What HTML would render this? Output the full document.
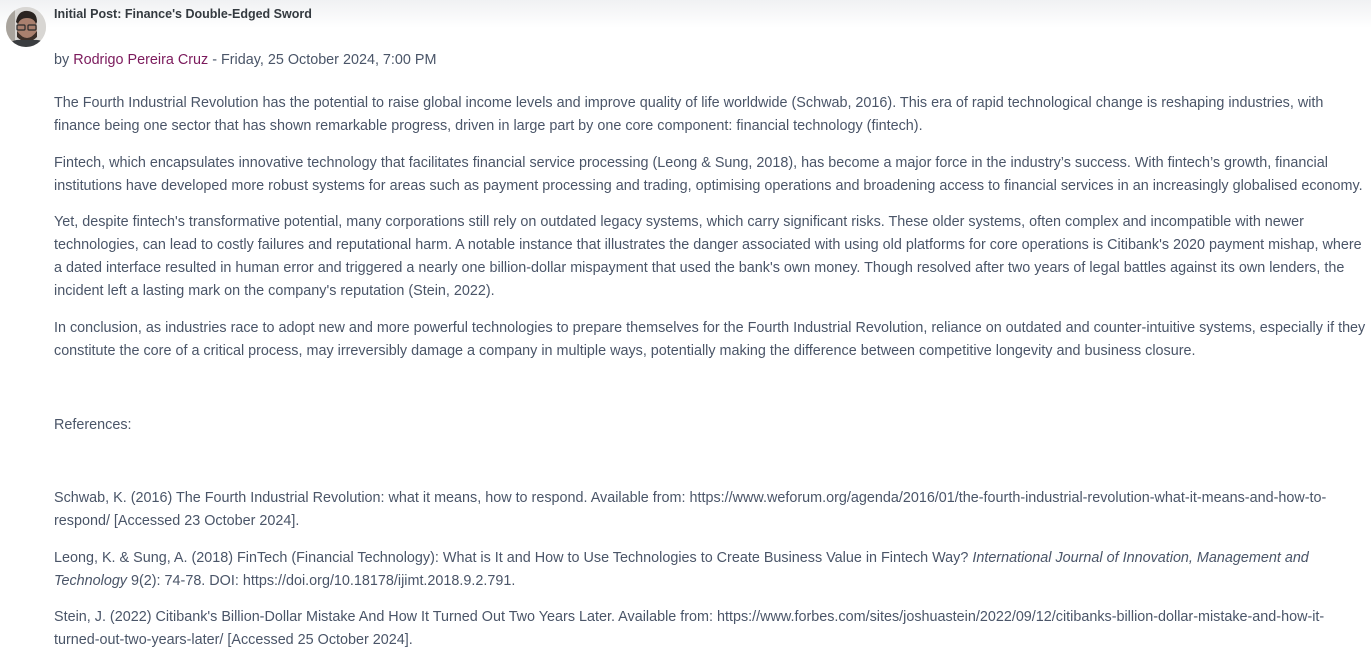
<!DOCTYPE html>
<html><head><meta charset="utf-8"><style>
body{margin:0;width:1371px;height:658px;background:#fff;overflow:hidden;position:relative;font-family:"Liberation Sans",Arial,sans-serif;color:#4a5568;}
.top{position:absolute;left:0;top:0;width:1371px;height:28px;background:linear-gradient(#f0f1f3,#fff);}
.l{position:absolute;left:54px;white-space:nowrap;font-size:14.38px;line-height:23px;}
.t{position:absolute;left:54px;top:7px;font-size:12.5px;font-weight:bold;color:#343a40;white-space:nowrap;}
a{color:#7b1a5c;text-decoration:none}
.av{position:absolute;left:6px;top:7px;width:40px;height:40px;border-radius:50%;overflow:hidden;background:#d6d4d1;}
</style></head><body>
<div class="top"></div>
<div class="av"><svg width="40" height="40" viewBox="0 0 40 40">
<rect width="40" height="40" fill="#d8d6d3"/>
<rect x="0" y="0" width="9" height="40" fill="#a9a49d"/>
<ellipse cx="21" cy="21" rx="10" ry="12" fill="#a9806e"/>
<path d="M10 15 Q12 3 22 4 Q31 5 31 15 L30 17 Q28 11 21 11 Q14 11 12 17Z" fill="#2a2320"/>
<path d="M11 24 Q21 38 31 24 L31 30 Q21 40 11 30Z" fill="#3b2f29"/>
<rect x="11" y="18" width="8" height="5" rx="1" fill="none" stroke="#2a2a2a" stroke-width="1.2"/>
<rect x="22" y="18" width="8" height="5" rx="1" fill="none" stroke="#2a2a2a" stroke-width="1.2"/>
<path d="M0 40 Q6 32 14 33 L28 33 Q36 32 40 38 L40 40Z" fill="#3a3d40"/>
</svg></div>
<div class="t">Initial Post: Finance's Double-Edged Sword</div>
<div class="l" style="top:49px">by <a>Rodrigo Pereira Cruz</a> - Friday, 25 October 2024, 7:00 PM</div>
<div class="l" style="top:92px">The Fourth Industrial Revolution has the potential to raise global income levels and improve quality of life worldwide (Schwab, 2016). This era of rapid technological change is reshaping industries, with<br>finance being one sector that has shown remarkable progress, driven in large part by one core component: financial technology (fintech).</div>
<div class="l" style="top:152px">Fintech, which encapsulates innovative technology that facilitates financial service processing (Leong &amp; Sung, 2018), has become a major force in the industry’s success. With fintech’s growth, financial<br>institutions have developed more robust systems for areas such as payment processing and trading, optimising operations and broadening access to financial services in an increasingly globalised economy.</div>
<div class="l" style="top:211px">Yet, despite fintech's transformative potential, many corporations still rely on outdated legacy systems, which carry significant risks. These older systems, often complex and incompatible with newer<br>technologies, can lead to costly failures and reputational harm. A notable instance that illustrates the danger associated with using old platforms for core operations is Citibank's 2020 payment mishap, where<br>a dated interface resulted in human error and triggered a nearly one billion-dollar mispayment that used the bank's own money. Though resolved after two years of legal battles against its own lenders, the<br>incident left a lasting mark on the company's reputation (Stein, 2022).</div>
<div class="l" style="top:317px">In conclusion, as industries race to adopt new and more powerful technologies to prepare themselves for the Fourth Industrial Revolution, reliance on outdated and counter-intuitive systems, especially if they<br>constitute the core of a critical process, may irreversibly damage a company in multiple ways, potentially making the difference between competitive longevity and business closure.</div>
<div class="l" style="top:414px">References:</div>
<div class="l" style="top:487px">Schwab, K. (2016) The Fourth Industrial Revolution: what it means, how to respond. Available from: https://www.weforum.org/agenda/2016/01/the-fourth-industrial-revolution-what-it-means-and-how-to-<br>respond/ [Accessed 23 October 2024].</div>
<div class="l" style="top:547px">Leong, K. &amp; Sung, A. (2018) FinTech (Financial Technology): What is It and How to Use Technologies to Create Business Value in Fintech Way? <i>International Journal of Innovation, Management and<br>Technology</i> 9(2): 74-78. DOI: https://doi.org/10.18178/ijimt.2018.9.2.791.</div>
<div class="l" style="top:606px">Stein, J. (2022) Citibank's Billion-Dollar Mistake And How It Turned Out Two Years Later. Available from: https://www.forbes.com/sites/joshuastein/2022/09/12/citibanks-billion-dollar-mistake-and-how-it-<br>turned-out-two-years-later/ [Accessed 25 October 2024].</div>
</body></html>
